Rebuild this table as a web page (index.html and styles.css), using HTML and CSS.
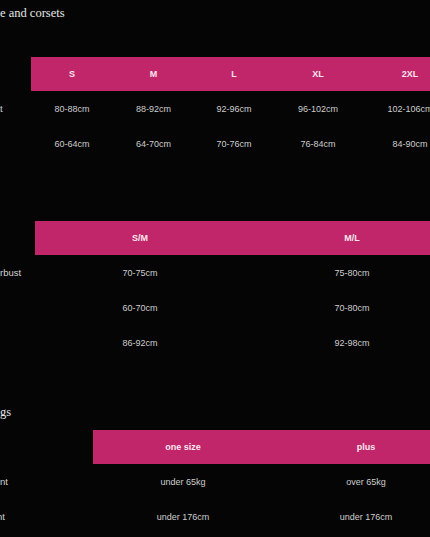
FILE: index.html
```html
<!DOCTYPE html>
<html lang="en">
<head>
<meta charset="utf-8">
<title>Size charts</title>
<link rel="stylesheet" href="styles.css">
</head>
<body>
<div class="page">
  <h2 class="title title-first">e and corsets</h2>

  <div class="chart chart-one">
    <div class="cell label"></div>
    <div class="cell head">S</div>
    <div class="cell head">M</div>
    <div class="cell head">L</div>
    <div class="cell head">XL</div>
    <div class="cell head">2XL</div>

    <div class="cell label">t</div>
    <div class="cell">80-88cm</div>
    <div class="cell">88-92cm</div>
    <div class="cell">92-96cm</div>
    <div class="cell">96-102cm</div>
    <div class="cell">102-106cm</div>

    <div class="cell label"></div>
    <div class="cell">60-64cm</div>
    <div class="cell">64-70cm</div>
    <div class="cell">70-76cm</div>
    <div class="cell">76-84cm</div>
    <div class="cell">84-90cm</div>
  </div>

  <div class="chart chart-two">
    <div class="cell label"></div>
    <div class="cell head">S/M</div>
    <div class="cell head">M/L</div>

    <div class="cell label">rbust</div>
    <div class="cell">70-75cm</div>
    <div class="cell">75-80cm</div>

    <div class="cell label"></div>
    <div class="cell">60-70cm</div>
    <div class="cell">70-80cm</div>

    <div class="cell label"></div>
    <div class="cell">86-92cm</div>
    <div class="cell">92-98cm</div>
  </div>

  <h2 class="title title-second">gs</h2>

  <div class="chart chart-three">
    <div class="cell label"></div>
    <div class="cell head">one size</div>
    <div class="cell head">plus</div>

    <div class="cell label">nt</div>
    <div class="cell">under 65kg</div>
    <div class="cell">over 65kg</div>

    <div class="cell label clipped">ht</div>
    <div class="cell">under 176cm</div>
    <div class="cell">under 176cm</div>
  </div>
</div>
</body>
</html>
```

FILE: styles.css
```css
html, body {
  margin: 0;
  padding: 0;
  background: #050505;
  overflow: hidden;
}

.page {
  width: 430px;
  height: 537px;
  overflow: hidden;
  font-family: "Liberation Sans", Arial, sans-serif;
}

.title {
  margin: 0;
  font-family: "Liberation Serif", "Times New Roman", serif;
  font-weight: normal;
  font-size: 12.5px;
  line-height: 16px;
  color: #e6e6e6;
  white-space: nowrap;
}

.title-first {
  padding-top: 5px;
  margin-bottom: 36px;
}

.title-second {
  margin-top: 44px;
  margin-bottom: 10px;
}

.chart {
  display: grid;
  grid-auto-rows: 35px;
  width: max-content;
}

.chart-one {
  grid-template-columns: 31px 82px 81px 80px 88px 96px;
  grid-template-rows: 34px;
}

.chart-two {
  grid-template-columns: 35px 210px 214px;
  grid-template-rows: 34px;
  margin-top: 60px;
}

.chart-three {
  grid-template-columns: 93px 180px 186px;
  grid-template-rows: 34px;
}

.cell {
  display: flex;
  align-items: center;
  justify-content: center;
  font-size: 9px;
  color: #cdcdcd;
  white-space: nowrap;
}

.cell.head {
  background: #c1266a;
  color: #f8e6ee;
  font-weight: bold;
}

.cell.label {
  justify-content: flex-start;
  font-size: 9.5px;
  color: #d2d2d2;
  overflow: hidden;
}

.cell.clipped {
  text-indent: -3px;
}
```
